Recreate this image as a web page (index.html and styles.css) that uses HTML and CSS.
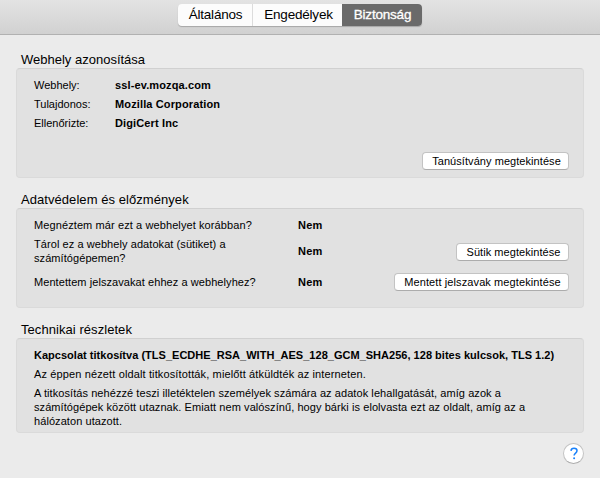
FILE: index.html
```html
<!DOCTYPE html>
<html lang="hu">
<head>
<meta charset="utf-8">
<title>Biztonság</title>
<link rel="stylesheet" href="styles.css">
</head>
<body>
<header class="toolbar">
  <nav class="tabs">
    <a class="tab tab-general"><span>Általános</span></a>
    <a class="tab tab-permissions"><span>Engedélyek</span></a>
    <a class="tab tab-security"><span>Biztonság</span></a>
  </nav>
</header>
<main class="content">
  <h2>Webhely azonosítása</h2>
  <section class="group identity">
    <dl>
      <dt>Webhely:</dt><dd>ssl-ev.mozqa.com</dd>
      <dt>Tulajdonos:</dt><dd>Mozilla Corporation</dd>
      <dt>Ellenőrizte:</dt><dd>DigiCert Inc</dd>
    </dl>
    <button class="btn-cert">Tanúsítvány megtekintése</button>
  </section>
  <h2 class="heading-wide">Adatvédelem és előzmények</h2>
  <section class="group privacy">
    <div class="row row-visited"><span class="question">Megnéztem már ezt a webhelyet korábban?</span><b>Nem</b></div>
    <div class="row row-cookies"><span class="question">Tárol ez a webhely adatokat (sütiket) a<br>számítógépemen?</span><b>Nem</b><button class="btn-cookies">Sütik megtekintése</button></div>
    <div class="row row-passwords"><span class="question">Mentettem jelszavakat ehhez a webhelyhez?</span><b>Nem</b><button class="btn-passwords">Mentett jelszavak megtekintése</button></div>
  </section>
  <h2 class="heading-wide">Technikai részletek</h2>
  <section class="group technical">
    <p class="cipher">Kapcsolat titkosítva (TLS_ECDHE_RSA_WITH_AES_128_GCM_SHA256, 128 bites kulcsok, TLS 1.2)</p>
    <p class="summary">Az éppen nézett oldalt titkosították, mielőtt átküldték az interneten.</p>
    <p class="details">A titkosítás nehézzé teszi illetéktelen személyek számára az adatok lehallgatását, amíg azok a<br>számítógépek között utaznak. Emiatt nem valószínű, hogy bárki is elolvasta ezt az oldalt, amíg az a<br>hálózaton utazott.</p>
  </section>
  <button class="help" aria-label="Súgó"><svg width="10" height="13" viewBox="0 0 10 13"><path d="M2 3.900C2.100 2.200 3.300 1.300 5 1.300s3 1 3 2.500c0 2.300-2.900 2.300-2.900 4.800" fill="none" stroke="#1a82fb" stroke-width="1.500"/><circle cx="5.100" cy="11.200" r="1" fill="#1a82fb"/></svg></button>
</main>
</body>
</html>
```
FILE: styles.css
```css
* { box-sizing: border-box; }
body {
  margin: 0;
  height: 478px;
  overflow: hidden;
  background: #ebebeb;
  color: #000;
  font: 11px/14px "Liberation Sans", Arial, sans-serif;
  white-space: nowrap;
}
.toolbar {
  height: 35px;
  padding: 4px 0 0 178px;
  background: linear-gradient(#e3e3e3, #d1d1d1);
  border-bottom: 1px solid #b1b1b1;
}
.tabs {
  display: flex;
  width: 244px;
  height: 22px;
  border-radius: 4px;
  overflow: hidden;
  background: #fcfcfc;
  box-shadow: 0 1px 1px rgba(0, 0, 0, .22);
}
.tab { display: flex; justify-content: center; padding-left: 1px; font-size: 13.5px; letter-spacing: -.2px; line-height: 21px; }
.tab-general { width: 75px; border-right: 1px solid #dcdcdc; }
.tab-permissions { width: 89px; padding-left: 2px; }
.tab-security { width: 80px; background: #6a6a6a; color: #fff; -webkit-text-stroke: .3px #fff; }
.content { display: flex; flex-direction: column; padding: 15px 16px 0; }
h2 { height: 18px; margin: 0 0 0 5px; font-size: 13px; font-weight: 400; line-height: 20px; }
.heading-wide { letter-spacing: .06px; }
.group {
  margin-bottom: 12px;
  border: 1px solid #dadada;
  border-top-color: #d0d0d0;
  border-radius: 4px;
  background: #e1e1e1;
}
.identity { display: flex; flex-direction: column; height: 110px; padding: 7px 14px 7px 17px; }
dl { display: grid; grid-template-columns: 81px 1fr; grid-auto-rows: 19px; line-height: 19px; margin: 0; }
dd { margin: 0; font-weight: 700; letter-spacing: .13px; }
button {
  height: 18px;
  padding: 0 0 0 2px;
  border: 1px solid #c3c3c3;
  border-bottom-color: #acacac;
  border-radius: 4px;
  background: #fff;
  color: #000;
  font: 11px/16px "Liberation Sans", Arial, sans-serif;
  letter-spacing: .06px;
}
.identity button { margin: auto 0 0 auto; }
.btn-cert { width: 147px; }
.privacy { height: 100px; padding: 6px 14px 0 17px; }
.row { display: grid; grid-template-columns: 264px 1fr auto; align-items: center; height: 19px; letter-spacing: .07px; }
.row-visited { letter-spacing: .1px; }
.row b { letter-spacing: .2px; }
.row-cookies { height: 33px; }
.row-cookies button { margin-top: 2px; }
.row-passwords { height: 29px; }
.row-passwords button { margin-top: 1px; }
.btn-cookies { width: 113px; }
.btn-passwords { width: 175px; letter-spacing: .1px; }
.technical { height: 95px; padding: 9px 14px 0 17px; }
.technical p { margin: 0 0 5px; }
.technical .cipher { font-weight: 700; letter-spacing: .02px; }
.summary { letter-spacing: .13px; }
.details { letter-spacing: .07px; }
.help { display: grid; place-items: center; align-self: flex-end; width: 21px; height: 21px; margin-top: -2px; padding: 0; border-radius: 50%; }
```
